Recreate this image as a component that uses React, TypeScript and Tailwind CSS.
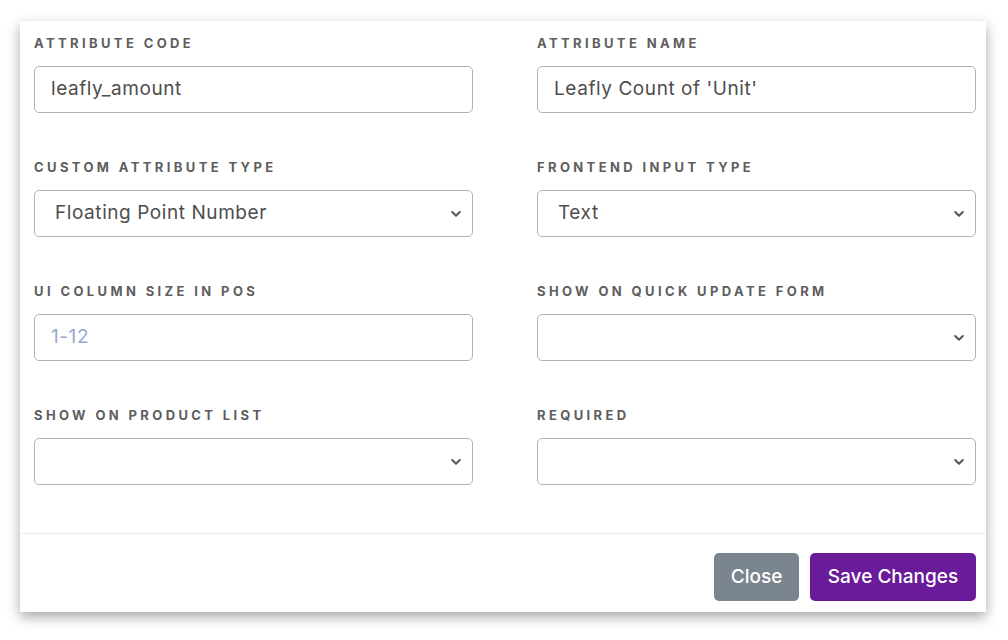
import React from "react";

const font = { fontFamily: "Inter, 'Noto Sans', sans-serif" };

function Label({ children }: { children: React.ReactNode }) {
  return (
    <div className="h-4 text-[13px] leading-4 font-bold tracking-[0.26em] text-[#5e5e5e] uppercase">
      {children}
    </div>
  );
}

function Chevron() {
  return (
    <svg width="10" height="7" viewBox="0 0 10 7" className="absolute right-[11px] top-1/2 -translate-y-1/2">
      <path d="M1.2 1.5 L5 5.2 L8.8 1.5" fill="none" stroke="#555" strokeWidth="2" strokeLinecap="round" strokeLinejoin="round" />
    </svg>
  );
}

function Input({ value, placeholder }: { value?: string; placeholder?: string }) {
  return (
    <div className="mt-[15px] h-[47px] w-[439px] rounded-[5px] border border-[#b3b3b3] flex items-center pl-4 text-[19px] tracking-[0.03em]">
      {value ? (
        <span className="text-[#4d4d4d]">{value}</span>
      ) : (
        <span className="text-[#9aa6cf]">{placeholder}</span>
      )}
    </div>
  );
}

function Select({ value }: { value?: string }) {
  return (
    <div className="relative mt-[15px] h-[47px] w-[439px] rounded-[5px] border border-[#b3b3b3] flex items-center pl-[20px] text-[19px] tracking-[0.03em] text-[#4d4d4d]">
      <span>{value ?? ""}</span>
      <Chevron />
    </div>
  );
}

function Field({ label, children }: { label: string; children: React.ReactNode }) {
  return (
    <div className="flex flex-col">
      <Label>{label}</Label>
      {children}
    </div>
  );
}

export default function App() {
  return (
    <div className="min-h-[640px] bg-white pl-5 pt-[21px]" style={font}>
      <div className="w-[966px] h-[591px] bg-white shadow-[0_5px_12px_rgba(0,0,0,0.35)] flex flex-col">
        <div className="pl-[14px] pt-[14px] grid grid-cols-[439px_439px] content-start gap-x-16 gap-y-[46px] h-[513px] border-b border-[#ececec]">
          <Field label="Attribute Code">
            <Input value="leafly_amount" />
          </Field>
          <Field label="Attribute Name">
            <Input value="Leafly Count of 'Unit'" />
          </Field>
          <Field label="Custom Attribute Type">
            <Select value="Floating Point Number" />
          </Field>
          <Field label="Frontend Input Type">
            <Select value="Text" />
          </Field>
          <Field label="UI Column Size in POS">
            <Input placeholder="1-12" />
          </Field>
          <Field label="Show on Quick Update Form">
            <Select />
          </Field>
          <Field label="Show on Product List">
            <Select />
          </Field>
          <Field label="Required">
            <Select />
          </Field>
        </div>
        <div className="flex justify-end gap-[11px] pr-[10px] pt-[19px]">
          <button className="h-[48px] w-[85px] rounded-[5px] bg-[#7a858f] text-white text-[19px] font-medium">
            Close
          </button>
          <button className="h-[48px] w-[166px] rounded-[5px] bg-[#6a1b9a] text-white text-[19px] font-medium">
            Save Changes
          </button>
        </div>
      </div>
    </div>
  );
}
